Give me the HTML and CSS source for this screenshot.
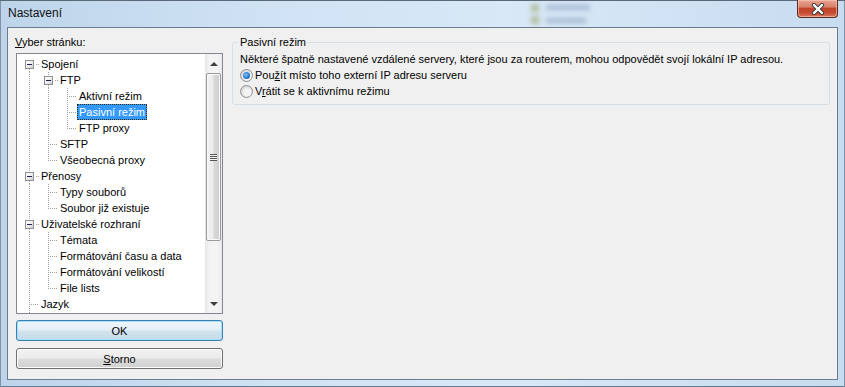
FILE: index.html
```html
<!DOCTYPE html>
<html lang="cs">
<head>
<meta charset="utf-8">
<title>Nastavení</title>
<link rel="stylesheet" href="styles.css">
</head>
<body>
<div class="window">
  <div class="titlebar">
    <span class="title">Nastavení</span>
    <div class="ghost"><span class="g-icon"></span><span class="g-icon g2"></span><span class="g-text"></span><span class="g-text g2"></span></div>
    <button class="close" aria-label="Zavřít">
      <svg width="14" height="12" viewBox="0 0 14 12">
        <path d="M3 2 L11 10 M11 2 L3 10" stroke="#3a3a3a" stroke-width="4.2" stroke-linecap="round"/>
        <path d="M3 2 L11 10 M11 2 L3 10" stroke="#ffffff" stroke-width="2.4" stroke-linecap="round"/>
      </svg>
    </button>
  </div>
  <div class="client">
    <div class="left">
      <div class="label"><u>V</u>yber stránku:</div>
      <div class="tree">
        <div class="rows">
          <div class="row"><span class="cell e dn"><i class="box"></i></span><span class="txt">Spojení</span></div>
          <div class="row"><span class="cell v"></span><span class="cell e up dn"><i class="box"></i></span><span class="txt">FTP</span></div>
          <div class="row"><span class="cell v"></span><span class="cell v"></span><span class="cell t"></span><span class="txt">Aktivní režim</span></div>
          <div class="row"><span class="cell v"></span><span class="cell v"></span><span class="cell t"></span><span class="txt sel">Pasivní režim</span></div>
          <div class="row"><span class="cell v"></span><span class="cell v"></span><span class="cell c"></span><span class="txt">FTP proxy</span></div>
          <div class="row"><span class="cell v"></span><span class="cell t"></span><span class="txt">SFTP</span></div>
          <div class="row"><span class="cell v"></span><span class="cell c"></span><span class="txt">Všeobecná proxy</span></div>
          <div class="row"><span class="cell e up dn"><i class="box"></i></span><span class="txt">Přenosy</span></div>
          <div class="row"><span class="cell v"></span><span class="cell t"></span><span class="txt">Typy souborů</span></div>
          <div class="row"><span class="cell v"></span><span class="cell c"></span><span class="txt">Soubor již existuje</span></div>
          <div class="row"><span class="cell e up dn"><i class="box"></i></span><span class="txt">Uživatelské rozhraní</span></div>
          <div class="row"><span class="cell v"></span><span class="cell t"></span><span class="txt">Témata</span></div>
          <div class="row"><span class="cell v"></span><span class="cell t"></span><span class="txt">Formátování času a data</span></div>
          <div class="row"><span class="cell v"></span><span class="cell t"></span><span class="txt">Formátování velikostí</span></div>
          <div class="row"><span class="cell v"></span><span class="cell c"></span><span class="txt">File lists</span></div>
          <div class="row"><span class="cell t"></span><span class="txt">Jazyk</span></div>
          <div class="row"><span class="cell v"></span></div>
        </div>
        <div class="vscroll">
          <div class="sbtn"><i class="arrow-up"></i></div>
          <div class="track">
            <div class="thumb"><i class="grip"></i></div>
          </div>
          <div class="sbtn"><i class="arrow-down"></i></div>
        </div>
      </div>
      <button class="btn default">OK</button>
      <button class="btn"><u>S</u>torno</button>
    </div>
    <fieldset class="group">
      <legend>Pasivní režim</legend>
      <div class="line">Některé špatně nastavené vzdálené servery, které jsou za routerem, mohou odpovědět svojí lokální IP adresou.</div>
      <label class="radio"><span class="rb on"></span><span>Pou<u>ž</u>ít místo toho externí IP adresu serveru</span></label>
      <label class="radio"><span class="rb"></span><span>V<u>r</u>átit se k aktivnímu režimu</span></label>
    </fieldset>
  </div>
</div>
</body>
</html>
```

FILE: styles.css
```css
html, body {
  margin: 0;
  padding: 0;
  width: 845px;
  height: 387px;
  overflow: hidden;
  background: #c6dbef;
}

.window {
  width: 845px;
  height: 387px;
  box-sizing: border-box;
  display: flex;
  flex-direction: column;
  background: linear-gradient(to right, #bdd4ea 0%, #cfe2f4 30%, #d8e8f7 60%, #c8dcf0 100%);
  border-top: 1px solid #5b6877;
  box-shadow: inset 1px 0 0 #7e93a8, inset -1px 0 0 #7e93a8, inset 0 -1px 0 #5f7a94;
  position: relative;
  font-family: "Liberation Sans", Arial, sans-serif;
}

.titlebar {
  height: 26px;
  flex: none;
  display: flex;
  align-items: flex-start;
  position: relative;
}

.title {
  font-size: 12px;
  line-height: 14px;
  color: #111;
  margin: 5px 0 0 8px;
  flex: 1;
}

.ghost {
  position: absolute;
  left: 528px;
  top: 2px;
  width: 70px;
  height: 24px;
  filter: blur(2.5px);
  opacity: 0.45;
}
.g-icon {
  position: absolute;
  left: 3px;
  top: 1px;
  width: 8px;
  height: 8px;
  background: #8a8f3a;
}
.g-icon.g2 { top: 13px; }
.g-text {
  position: absolute;
  left: 18px;
  top: 2px;
  width: 44px;
  height: 5px;
  background: #6f87a6;
}
.g-text.g2 { top: 15px; width: 40px; }

.close {
  flex: none;
  width: 41px;
  height: 18px;
  margin: -1px 7px 0 0;
  padding: 0;
  border: 1px solid #5d2a20;
  border-top: none;
  border-radius: 0 0 4px 4px;
  background: linear-gradient(#e9a392 0%, #d9826c 40%, #c2452a 50%, #c54b31 75%, #dd7b5e 100%);
  box-shadow: inset 0 0 0 1px rgba(255, 210, 195, 0.55);
  display: flex;
  align-items: center;
  justify-content: center;
}
.close svg { display: block; margin-top: 1px; }

.client {
  flex: 1;
  margin: 0 7px 7px 7px;
  border: 1px solid #6d7c8c;
  background: #f0f0f0;
  display: flex;
  align-items: flex-start;
  font-size: 11px;
  color: #000;
}

.left {
  width: 207px;
  flex: none;
  margin-left: 8px;
  display: flex;
  flex-direction: column;
}

.label {
  line-height: 14px;
  margin: 7px 0 0 -1px;
}

.tree {
  margin-top: 4px;
  height: 261px;
  box-sizing: border-box;
  border: 1px solid #828790;
  background: #fff;
  display: flex;
  overflow: hidden;
}

.rows {
  flex: 1;
  padding: 2px 0 0 3px;
  overflow: hidden;
}

.row {
  height: 16px;
  display: flex;
  align-items: stretch;
  white-space: nowrap;
}

.cell {
  width: 19px;
  height: 16px;
  flex: none;
  position: relative;
}

.cell.v::before,
.cell.t::before,
.cell.c::before,
.cell.e.up::before,
.cell.e.dn::after {
  content: "";
  position: absolute;
  left: 9px;
  width: 1px;
  background: repeating-linear-gradient(to bottom, #a0a0a0 0 1px, transparent 1px 2px);
}
.cell.v::before,
.cell.t::before { top: 0; height: 16px; }
.cell.c::before { top: 0; height: 9px; }
.cell.e.up::before { top: 0; height: 5px; }
.cell.e.dn::after { top: 12px; height: 4px; background: repeating-linear-gradient(to bottom, transparent 0 1px, #a0a0a0 1px 2px); }

.cell.t::after,
.cell.c::after {
  content: "";
  position: absolute;
  left: 11px;
  top: 8px;
  width: 8px;
  height: 1px;
  background: repeating-linear-gradient(to right, #a0a0a0 0 1px, transparent 1px 2px);
}

.box {
  position: absolute;
  left: 5px;
  top: 4px;
  width: 9px;
  height: 9px;
  box-sizing: border-box;
  border: 1px solid #919191;
  background: linear-gradient(135deg, #ffffff 0%, #f0f0f0 50%, #cdcdcd 100%);
}
.box::before {
  content: "";
  position: absolute;
  left: 1px;
  top: 3px;
  width: 5px;
  height: 1px;
  background: #20204a;
}
.box::after {
  content: "";
  position: absolute;
  left: 9px;
  top: 3px;
  width: 5px;
  height: 1px;
  background: repeating-linear-gradient(to right, transparent 0 1px, #a0a0a0 1px 2px);
}

.txt {
  padding: 0 2px;
  line-height: 16px;
}
.txt.sel {
  background: #3399ff;
  color: #fff;
  outline: 1px dotted #3a2c10;
  outline-offset: -1px;
}

.vscroll {
  width: 17px;
  flex: none;
  display: flex;
  flex-direction: column;
  background: linear-gradient(to right, #e6e6e6, #f3f3f3 25%, #f3f3f3 75%, #e9e9e9);
}
.sbtn {
  height: 18px;
  flex: none;
  display: flex;
  align-items: center;
  justify-content: center;
}
.arrow-up, .arrow-down {
  width: 0;
  height: 0;
  border-left: 4px solid transparent;
  border-right: 4px solid transparent;
}
.arrow-up { border-bottom: 4px solid #404040; margin-top: 2px; }
.arrow-down { border-top: 4px solid #404040; margin-top: 0; }

.track {
  flex: 1;
  padding: 1px 1px 0 1px;
}
.thumb {
  height: 168px;
  box-sizing: border-box;
  border: 1px solid #9a9a9a;
  border-radius: 2px;
  background: linear-gradient(to right, #f3f3f3 0%, #ebebeb 45%, #d9d9d9 55%, #cdcdcd 100%);
  box-shadow: inset 0 0 0 1px #fafafa;
  display: flex;
  align-items: center;
  justify-content: center;
}
.grip {
  width: 7px;
  height: 7px;
  background: repeating-linear-gradient(to bottom, #555 0 1px, #f4f4f4 1px 2px);
}

.btn {
  display: flex;
  align-items: center;
  justify-content: center;
  width: 207px;
  height: 21px;
  padding: 0;
  box-sizing: border-box;
  border: 1px solid #707070;
  border-radius: 3px;
  background: linear-gradient(#f2f2f2 0%, #ebebeb 48%, #dddddd 52%, #cfcfcf 100%);
  box-shadow: inset 0 0 0 1px #fbfbfb;
  font: 11px "Liberation Sans", Arial, sans-serif;
  color: #000;
  margin-top: 6px;
}
.btn + .btn { margin-top: 7px; }
.btn.default {
  border-color: #3c7fb1;
  box-shadow: inset 0 0 0 1px #9fe0fa;
  background: linear-gradient(#eef6fb 0%, #e3eef6 48%, #d3e3ef 52%, #c6dae9 100%);
}

.group {
  flex: 1;
  margin: 8px 7px 0 9px;
  padding: 2px 6px 5px 7px;
  border: 1px solid #d5dfe5;
  border-radius: 3px;
  min-width: 0;
}
.group legend {
  padding: 0 2px;
  margin-left: -2px;
  line-height: 13px;
  font-size: 11px;
}
.line {
  line-height: 16px;
  white-space: nowrap;
}
.radio {
  display: flex;
  align-items: center;
  height: 16px;
}
.rb {
  width: 13px;
  height: 13px;
  box-sizing: border-box;
  border-radius: 50%;
  border: 1px solid #8e8f8f;
  background: radial-gradient(circle at 60% 60%, #f4f4f4 0 35%, #d8d8d8 70%, #eaeaea 100%);
  margin-right: 2px;
  position: relative;
  flex: none;
}
.rb.on::after {
  content: "";
  position: absolute;
  left: 2px;
  top: 2px;
  width: 7px;
  height: 7px;
  border-radius: 50%;
  background: radial-gradient(circle at 40% 40%, #7fc2f4 0%, #2a7ad2 55%, #0f4a9a 100%);
}
```
